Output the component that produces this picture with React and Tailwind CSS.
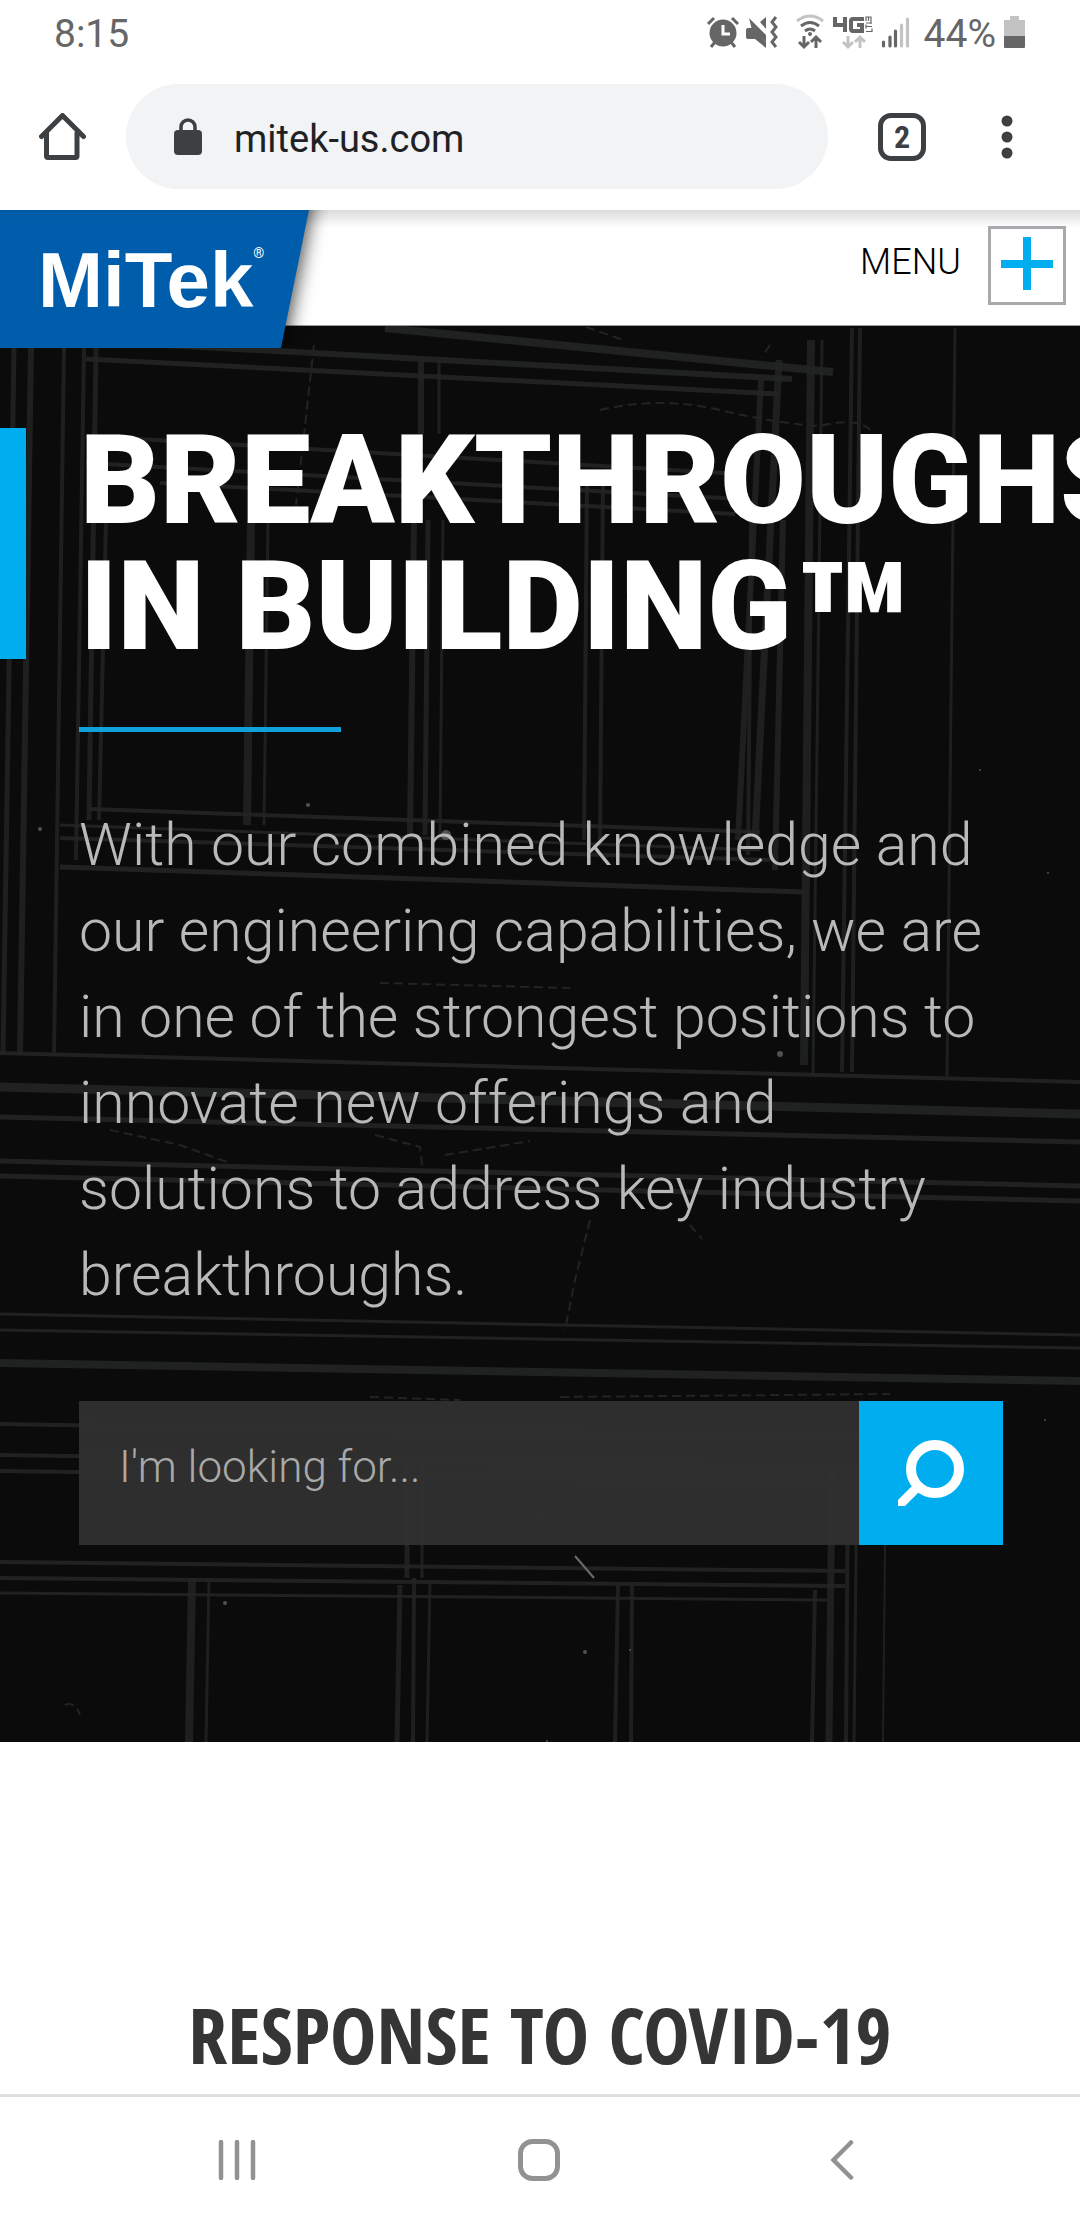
const studs = [
  // upper panel
  [14, 348, 3, 1055, 5], [31, 348, 20, 1055, 6], [64, 348, 54, 1055, 4],
  [84, 348, 76, 860, 4], [96, 348, 89, 820, 5], [106, 520, 99, 820, 4],
  [421, 360, 421, 434, 6], [439, 360, 439, 434, 3], [414, 520, 410, 835, 6], [428, 520, 425, 835, 5], [443, 520, 440, 835, 3],
  [251, 520, 247, 825, 8], [268, 520, 264, 825, 3],
  [587, 480, 584, 840, 4], [603, 480, 600, 840, 4],
  [761, 380, 738, 840, 6], [779, 360, 755, 840, 7], [811, 340, 804, 1065, 8], [822, 340, 813, 1075, 3],
  [751, 520, 748, 855, 4], [783, 520, 775, 870, 6],
  [852, 328, 842, 1072, 4], [860, 328, 852, 1072, 4], [955, 328, 947, 1076, 3],
  // lower panel
  [407, 1463, 407, 1578, 5], [422, 1463, 422, 1578, 3],
  [192, 1578, 189, 1742, 8], [209, 1578, 206, 1742, 3],
  [400, 1585, 397, 1742, 5], [414, 1578, 413, 1742, 4], [430, 1580, 427, 1742, 3],
  [618, 1585, 615, 1742, 4], [632, 1585, 631, 1742, 4],
  [815, 1590, 812, 1742, 4], [832, 1470, 829, 1742, 7], [848, 1470, 846, 1742, 4], [857, 1470, 854, 1742, 3], [885, 1545, 883, 1742, 2],
];

const beams = [
  [385, 328, 833, 372, 8], [165, 345, 792, 379, 6], [86, 359, 778, 394, 5],
  [86, 436, 740, 474, 4], [86, 463, 740, 499, 4], [160, 483, 735, 514, 4],
  [90, 809, 760, 832, 4], [60, 825, 760, 850, 3], [60, 838, 770, 860, 4], [60, 867, 804, 892, 5],
  [0, 1053, 1080, 1082, 4], [0, 1087, 1080, 1114, 9], [0, 1117, 1080, 1142, 5],
  [0, 1161, 1080, 1186, 5], [0, 1176, 1080, 1201, 5], [0, 1314, 1080, 1335, 3], [0, 1330, 1080, 1348, 3],
  [0, 1363, 1080, 1381, 8], [0, 1424, 859, 1438, 4], [0, 1455, 859, 1468, 4], [0, 1471, 850, 1482, 4],
  [0, 1562, 845, 1571, 4], [0, 1578, 845, 1586, 4], [0, 1593, 828, 1600, 3],
];

const scratches = [
  "M314 345l-10 90-8 70", "M586 327l40 14M770 345l-8 12", "M600 410q60-14 120 0t100 16q40-10 52 6",
  "M110 1130l70 15 50 18", "M375 1135l45 12 2 18M445 1155l85-14", "M590 1220l-15 60-10 50",
  "M370 1397l90 3M560 1397l330-3", "M690 1225l12 14", "M65 1705q10-4 15 10", "M380 983l190 5", "M540 1510l1 16",
];

const dust = [[487, 440, 3], [308, 805, 2], [446, 835, 5], [40, 829, 2], [780, 1054, 3], [1048, 873, 1], [225, 1603, 2], [547, 1741, 1], [585, 1652, 2], [980, 770, 1], [1045, 1420, 1], [630, 1650, 1]];

function Blueprint() {
  return (
    <svg className="absolute inset-0 h-full w-full" viewBox="0 326 1080 1416" preserveAspectRatio="none" aria-hidden="true">
      <g stroke="#222323" fill="none">
        {studs.map(([a, b, c, d, w], i) => <line key={i} x1={a} y1={b} x2={c} y2={d} strokeWidth={w} opacity="0.85" />)}
        {beams.map(([a, b, c, d, w], i) => <line key={i} x1={a} y1={b} x2={c} y2={d} strokeWidth={w} opacity="0.9" />)}
      </g>
      <g stroke="#232323" strokeWidth="2" strokeDasharray="9 5" fill="none">
        {scratches.map((d) => <path key={d} d={d} />)}
      </g>
      <path d="M575 1556l19 22" stroke="#6b6b6b" strokeWidth="2" />
      {dust.map(([x, y, r]) => <circle key={x} cx={x} cy={y} r={r} fill="#6f6f6f" opacity="0.7" />)}
    </svg>
  );
}

function StatusIcons() {
  return (
    <svg className="h-[55px] w-[216px]" viewBox="700 5 216 55" aria-hidden="true">
      <g fill="none" stroke="#666">
        <circle cx="723" cy="33" r="13.5" fill="#666" stroke="none" />
        <path d="M708 24l6-6M738 24l-6-6M715 42l-4 5M731 42l4 5" strokeWidth="3" />
        <path d="M723 25v9h7" stroke="#fff" strokeWidth="3" />
        <path d="M748 28h4L766 42V48L755 39H748q-2 0-2-2v-7q0-2 2-2z M760 22l6-5v12z" fill="#666" stroke="none" />
        <path d="M749 18l17 17v7l-14-12z" fill="#666" stroke="none" />
        <path d="M776 17l-4 5 4 5-4 5 4 5-4 5 4 5" strokeWidth="3" />
        <path d="M797 21q13-10 26 0" stroke="#c3c3c3" strokeWidth="3" />
        <path d="M801 26q9-7 18 0M805 31q5-4 10 0" strokeWidth="3" />
        <circle cx="810" cy="34" r="2" fill="#666" stroke="none" />
        <path d="M804 36v11M799 42l5 5 5-5M816 48v-11M811 42l5-5 5 5" strokeWidth="3" />
        <path d="M835 17v8h10M845 17v15M864 19h-11q-2 0-2 2v8q0 2 2 2h9v-6h-5" strokeWidth="4" />
        <path d="M866 23h5M871 18v6M866 21v-4h5v4M868.5 17v4M866 26.5h6M866 24.5v4M866 31.5h6v-3" strokeWidth="1.2" />
        <path d="M848 36v11M843 42l5 5 5-5M860 48v-11M855 42l5-5 5 5" stroke="#c3c3c3" strokeWidth="3" />
        <path d="M883.5 42v4M890 37v9M895.5 31v15" strokeWidth="3.2" strokeLinecap="round" />
        <path d="M901.5 25v21M907.5 19v27" stroke="#c3c3c3" strokeWidth="3.2" strokeLinecap="round" />
      </g>
    </svg>
  );
}

function StatusBar() {
  return (
    <div className="flex h-16 items-center justify-between pl-[54px] pr-[55px] text-[39px] leading-none text-[#666]">
      <span className="pt-1">8:15</span>
      <div className="flex items-center">
        <StatusIcons />
        <span className="ml-2 pt-1">44%</span>
        <svg className="ml-2 h-8 w-[21px]" viewBox="0 0 21 32" aria-hidden="true">
          <path d="M6 0h9v4h6v16H0V4h6z" fill="#c3c3c3" />
          <path d="M0 20h21v11q0 1-1 1H1q-1 0-1-1z" fill="#666" />
        </svg>
      </div>
    </div>
  );
}

function BrowserBar() {
  return (
    <div className="flex items-center pl-[39px] pr-[67px] pt-5 pb-[21px]">
      <button type="button" aria-label="Home">
        <svg className="h-12 w-12" viewBox="39 113 48 48" fill="none" stroke="#3c4043" strokeWidth="5" strokeLinecap="round" strokeLinejoin="round">
          <path d="M41.5 136.5L62.5 115.5L83.5 136.5M46.5 133V156q0 1.5 1.5 1.5h27.5q1.5 0 1.5-1.5V133" />
        </svg>
      </button>
      <div className="ml-[39px] flex h-[105px] flex-1 items-center rounded-full bg-[#f1f3f4] pl-12">
        <svg className="h-[38px] w-7 shrink-0" viewBox="0 0 28 38" fill="none" stroke="#3c4043" aria-hidden="true">
          <rect x="0" y="12" width="28" height="25" rx="4" fill="#3c4043" stroke="none" />
          <path d="M7 14V9a7 7 0 0 1 14 0v5" strokeWidth="3.5" />
        </svg>
        <input aria-label="Address" defaultValue="mitek-us.com" className="ml-8 w-full min-w-0 bg-transparent pt-1 text-[38px] leading-none text-[#202124] outline-none" />
      </div>
      <button type="button" aria-label="Open tabs" className="ml-[50px] flex h-12 w-12 items-center justify-center rounded-[13px] border-[5px] border-[#3c4043] font-['Roboto_Condensed'] text-[32px] font-bold leading-none text-[#3c4043]">2</button>
      <button type="button" aria-label="More options" className="ml-[75px]">
        <svg className="h-11 w-3" viewBox="0 0 12 44" fill="#3c4043"><circle cx="6" cy="6" r="5.5" /><circle cx="6" cy="22" r="5.5" /><circle cx="6" cy="38" r="5.5" /></svg>
      </button>
    </div>
  );
}

function SiteHeader() {
  return (
    <header className="relative z-10 flex h-[116px] items-start justify-between border-b border-[#9a9a9a] bg-linear-to-b from-[#dcdcdc] via-white via-15% to-white pr-[14px]">
      <a href="#home" className="relative block h-[138px] w-[328px] overflow-hidden pl-[38px] pt-6 text-white">
        <svg className="absolute inset-0 h-full w-full" viewBox="0 0 328 138" aria-hidden="true">
          <defs>
            <linearGradient id="brand" x2="0" y2="1"><stop offset="0" stopColor="#04559c" /><stop offset=".2" stopColor="#005dab" /></linearGradient>
          </defs>
          <path className="drop-shadow-[3px_0_9px_rgba(0,0,0,0.7)]" d="M-20-20H313L281 138H-20z" fill="url(#brand)" />
        </svg>
        <span className="relative flex items-start">
          <span className="font-['Liberation_Sans'] text-[78px] font-bold leading-[92px]">MiTek</span>
          <span className="pt-3 text-[14px] leading-none">®</span>
        </span>
      </a>
      <button type="button" className="mt-4 flex items-center gap-[27px] text-[36px] font-light text-black">
        <span className="pb-2">MENU</span>
        <svg className="h-[79px] w-[78px]" viewBox="0 0 78 79" aria-hidden="true">
          <rect x="1.5" y="1.5" width="75" height="76" fill="#fff" stroke="#a7a9ac" strokeWidth="3" />
          <path d="M39 11v53M13 38h52" stroke="#00aeef" strokeWidth="8" />
        </svg>
      </button>
    </header>
  );
}

function Hero() {
  return (
    <section className="relative overflow-hidden bg-[#0b0b0b] pt-[92px] pb-[197px]">
      <Blueprint />
      <div className="relative">
        <div className="relative">
          <div className="absolute left-0 top-[10px] bottom-[11px] w-[26px] bg-[#00aeef]" />
          <h1 className="pl-20 text-[124px] font-black leading-[126px] text-white">
            BREAKTHROUGHS<br />IN BUILDING<span className="align-[-0.25em] text-[190px] leading-[0]">™</span>
          </h1>
        </div>
        <div className="pl-[79px] pr-[77px] pt-[57px]">
          <div className="h-[5px] w-[262px] bg-[#10a0dc]" />
          <p className="mt-[70px] text-[59px] font-light leading-[86px] text-[#b9b9b9]">
            With our combined knowledge and our engineering capabilities, we are in one of the strongest positions to innovate new offerings and solutions to address key industry breakthroughs.
          </p>
          <form className="mt-[83px] flex h-36" onSubmit={(e) => e.preventDefault()}>
            <input type="text" aria-label="Search" placeholder="I'm looking for..." className="min-w-0 flex-1 bg-[#303030]/95 px-10 pb-3 text-[44px] font-light text-white outline-none placeholder:text-[#a9a9a9] placeholder:opacity-100" />
            <button type="submit" aria-label="Search" className="flex w-36 items-center justify-center bg-[#00aeef]">
              <svg className="h-[66px] w-[66px]" viewBox="0 0 66 66" fill="none" stroke="#fff">
                <circle cx="37" cy="29" r="24" strokeWidth="10" />
                <path d="M15 45L0 60V66H7L22 51z" fill="#fff" stroke="none" />
              </svg>
            </button>
          </form>
        </div>
      </div>
    </section>
  );
}

function SystemNav() {
  return (
    <nav className="flex items-center justify-between border-t-[3px] border-[#e0e0e0] pl-[218px] pr-[226px] pt-[42px] pb-[39px]">
      <button type="button" aria-label="Recent apps">
        <svg className="h-[42px] w-[38px]" viewBox="0 0 38 42" stroke="#929292" strokeWidth="4.5" strokeLinecap="round"><path d="M3 3v36M19 3v36M35 3v36" /></svg>
      </button>
      <button type="button" aria-label="Home screen">
        <svg className="h-[42px] w-[42px]" viewBox="0 0 42 42" fill="none" stroke="#929292" strokeWidth="5"><rect x="2.5" y="2.5" width="37" height="37" rx="12" /></svg>
      </button>
      <button type="button" aria-label="Back">
        <svg className="h-[42px] w-8" viewBox="0 0 32 42" fill="none" stroke="#929292" strokeWidth="4.5" strokeLinecap="round"><path d="M29 3.500L11.500 21L29 38.500" /></svg>
      </button>
    </nav>
  );
}

export default function App() {
  return (
    <div className="flex min-h-screen flex-col overflow-x-hidden bg-white font-[Roboto,sans-serif]">
      <StatusBar />
      <BrowserBar />
      <SiteHeader />
      <main className="flex-1">
        <Hero />
        <h2 className="pt-[239px] text-center font-['Open_Sans_Condensed','Roboto_Condensed',sans-serif] text-[78px] font-bold leading-[106px] text-[#353535]">RESPONSE TO COVID-19</h2>
      </main>
      <SystemNav />
    </div>
  );
}
